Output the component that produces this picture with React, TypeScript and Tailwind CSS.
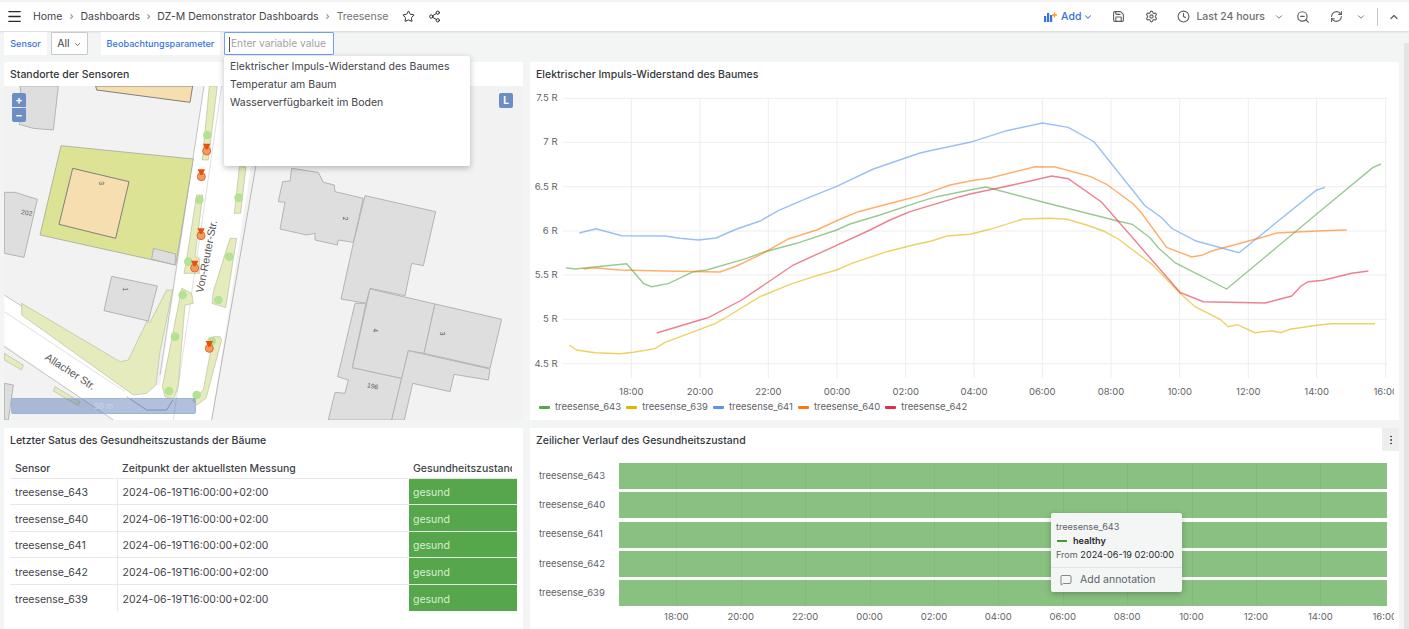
import { ChevronDown, ChevronUp, Clock, EllipsisVertical, Menu, MessageSquare, RefreshCw, Save, Settings, Share2, Star, ZoomOut } from 'lucide-react';

type Pt = [number, number];

// points read from the crops: left part starts at x=530, right part at x=970
const toPage = (left: Pt[], right: Pt[]) =>
  [...left.map(([x, y]) => [530 + x / 3, 85 + y / 3]), ...right.map(([x, y]) => [970 + x / 3, 85 + y / 3])]
    .map(([x, y]) => `${x.toFixed(1)},${y.toFixed(1)}`)
    .join(' ');

const series = [
  {
    name: 'treesense_643',
    color: '#56a64b',
    pts: toPage(
      [[108, 548], [135, 552], [200, 545], [290, 536], [340, 595], [365, 605], [415, 596], [490, 560], [530, 555], [650, 520], [705, 500], [800, 475], [920, 435], [960, 417], [1050, 390], [1170, 350], [1220, 335], [1320, 315]],
      [[48, 306], [215, 350], [440, 407], [487, 418], [540, 458], [565, 488], [615, 533], [770, 612], [1040, 387], [1208, 248], [1233, 237]],
    ),
  },
  {
    name: 'treesense_639',
    color: '#e0b400',
    pts: toPage(
      [[118, 780], [140, 795], [195, 803], [270, 806], [310, 802], [375, 791], [405, 772], [510, 733], [555, 716], [590, 696], [690, 635], [780, 598], [860, 572], [920, 555], [965, 535], [1070, 500], [1150, 480], [1205, 468], [1250, 453], [1320, 448]],
      [[60, 433], [160, 402], [240, 400], [290, 403], [350, 420], [400, 438], [445, 462], [548, 540], [630, 625], [675, 665], [750, 703], [775, 725], [802, 719], [855, 743], [905, 737], [932, 743], [960, 733], [1040, 721], [1085, 716], [1215, 716]],
    ),
  },
  {
    name: 'treesense_641',
    color: '#5794f2',
    pts: toPage(
      [[148, 444], [198, 431], [275, 452], [405, 453], [450, 460], [505, 465], [558, 459], [620, 432], [690, 408], [745, 377], [830, 340], [920, 304], [1030, 252], [1170, 204], [1210, 195], [1320, 172]],
      [[110, 137], [217, 114], [295, 127], [372, 170], [525, 362], [575, 398], [605, 430], [678, 468], [700, 474], [807, 503], [1040, 315], [1065, 307]],
    ),
  },
  {
    name: 'treesense_640',
    color: '#ff780a',
    pts: toPage(
      [[160, 552], [195, 548], [270, 555], [400, 558], [570, 561], [620, 543], [690, 510], [775, 462], [860, 435], [925, 405], [985, 380], [1070, 358], [1170, 332], [1260, 300], [1320, 288]],
      [[60, 279], [195, 245], [255, 246], [360, 274], [410, 298], [490, 357], [515, 385], [590, 487], [665, 516], [695, 511], [725, 498], [880, 456], [920, 444], [1040, 438], [1130, 435]],
    ),
  },
  {
    name: 'treesense_642',
    color: '#e02f44',
    pts: toPage(
      [[380, 744], [510, 705], [535, 698], [635, 645], [790, 540], [900, 490], [1020, 435], [1080, 405], [1140, 380], [1240, 350], [1290, 335], [1320, 327]],
      [[110, 304], [245, 273], [295, 281], [395, 352], [630, 622], [700, 650], [885, 654], [965, 633], [993, 603], [1015, 590], [1060, 586], [1145, 565], [1195, 558]],
    ),
  },
];

const yTicks: [string, number][] = [['7.5 R', 98.3], ['7 R', 142.3], ['6.5 R', 186.7], ['6 R', 231], ['5.5 R', 275], ['5 R', 319.3], ['4.5 R', 363.7]];
const xTicks: [string, number][] = [['18:00', 631.3], ['20:00', 700], ['22:00', 768.3], ['00:00', 837], ['02:00', 905.7], ['04:00', 974], ['06:00', 1042.3], ['08:00', 1111], ['10:00', 1179.7], ['12:00', 1248.3], ['14:00', 1316.7], ['16:00', 1385.7]];

const timeTicks: [string, number][] = [['18:00', 676.3], ['20:00', 740.7], ['22:00', 805.1], ['00:00', 869.5], ['02:00', 933.9], ['04:00', 998.3], ['06:00', 1062.7], ['08:00', 1127.1], ['10:00', 1191.5], ['12:00', 1255.9], ['14:00', 1320.3], ['16:00', 1384.7]];

const rows = ['treesense_643', 'treesense_640', 'treesense_641', 'treesense_642', 'treesense_639'];

const greyBuildings = [
  '13,322 45,322 112,343 72,517 13,505',
  '60,3 175,3 160,135 100,130 57,118 70,90',
  '460,490 527,507 525,540 455,522',
  '335,574 472,603 445,708 312,677',
  '875,250 955,262 970,292 1003,300 1005,320 1090,340 1060,472 1015,465 1012,480 945,465 945,445 920,450 840,432 855,352 835,350 848,290 870,288',
  '1095,332 1307,380 1270,542 1235,535 1215,632 1110,610 1098,655 1023,642 1060,475',
  '1065,655 1098,655 1057,848 1205,880 1175,1005 985,1005 1005,922 1035,925 1045,885 1013,875',
  '1110,612 1305,657 1272,805 1225,797 1205,880 1057,848',
  '1305,657 1505,703 1470,850 1272,805',
  '1225,797 1470,852 1465,885 1362,868 1350,920 1238,895 1213,1005 1175,1005 1205,880',
  '13,895 40,900 25,1005 13,1005',
];

const verge = [
  '628,3 652,3 625,225 607,225',
  '590,330 608,330 585,515 598,520 598,565 552,565 560,520',
  '718,245 738,245 722,385 703,385',
  '690,460 710,460 677,668 636,655 640,620',
  '545,610 575,625 580,655 555,660 535,900 522,942 495,935 487,905',
  '640,755 660,755 665,765 618,940 590,960 578,945 610,915',
  '65,655 360,830 385,825 440,710 450,712 500,615 518,615 480,800 468,900 440,925 400,930 65,690',
  '13,805 70,840 65,855 13,825',
  '165,905 240,950 235,962 160,918',
];

const trees: Pt[] = [[622, 150], [598, 345], [565, 530], [548, 630], [525, 755], [507, 918], [590, 930], [655, 645], [688, 515], [716, 338], [635, 768]];
const markers: Pt[] = [[620, 198], [604, 275], [603, 452], [584, 549], [628, 790]];
const houseNumbers: [string, number, number, number][] = [['3', 302, 300, 90], ['202', 80, 390, 10], ['1', 375, 618, 90], ['2', 1035, 407, 90], ['4', 1124, 742, 90], ['3', 1326, 752, 90], ['196', 1118, 910, 12]];

function MapDrawing() {
  return (
    <svg viewBox="12 3 1557 1002" className="block h-full w-full" preserveAspectRatio="none">
      <rect x="12" y="3" width="1557" height="1002" fill="#f2f2f2" />
      <polygon points="612,3 790,3 635,1005 340,1005 13,780 13,630 440,900 480,900" fill="#ffffff" />
      <polyline points="612,3 480,870" fill="none" stroke="#c4c4c4" strokeWidth="3" />
      <polyline points="665,3 520,1005" fill="none" stroke="#d0d0d0" strokeWidth="2" />
      <polyline points="768,240 635,1005" fill="none" stroke="#b8b8b8" strokeWidth="3" />
      <polyline points="13,630 440,905" fill="none" stroke="#c4c4c4" strokeWidth="3" />
      <polyline points="13,680 375,920" fill="none" stroke="#cfcfcf" strokeWidth="2" />
      <polyline points="13,785 340,1005" fill="none" stroke="#c4c4c4" strokeWidth="3" />
      <polyline points="380,935 440,975 500,975 518,945" fill="none" stroke="#888888" strokeWidth="2" />
      {verge.map((p) => (
        <polygon key={p} points={p} fill="#e5ebbd" stroke="#a8ad88" strokeWidth="1.5" />
      ))}
      <polygon points="183,182 580,222 527,540 120,450" fill="#dde394" stroke="#999999" strokeWidth="2" />
      <polygon points="218,250 387,290 347,460 177,418" fill="#f6deb0" stroke="#80807a" strokeWidth="3" />
      <polygon points="287,3 578,3 570,52 290,15" fill="#f6deb0" stroke="#80807a" strokeWidth="3" />
      {greyBuildings.map((p) => (
        <polygon key={p} points={p} fill="#dedede" stroke="#b4b4b4" strokeWidth="3" />
      ))}
      {trees.map(([x, y]) => (
        <circle key={`${x}-${y}`} cx={x} cy={y} r="13" fill="#b4e294" />
      ))}
      {markers.map(([x, y]) => (
        <g key={`${x}-${y}`}>
          <circle cx={x} cy={y} r="12" fill="#ee9c62" stroke="#e8672a" strokeWidth="3" />
          <polygon points={`${x - 11},${y - 22} ${x + 11},${y - 22} ${x + 3},${y - 5} ${x - 3},${y - 5}`} fill="#e3530b" />
        </g>
      ))}
      {houseNumbers.map(([label, x, y, rot]) => (
        <text key={`${label}-${x}`} x={x} y={y} fontSize="20" fill="#555555" textAnchor="middle" transform={`rotate(${rot} ${x} ${y - 6})`} fontFamily="Liberation Sans, sans-serif">
          {label}
        </text>
      ))}
      <text x="622" y="515" fontSize="32" fill="#555555" textAnchor="middle" dominantBaseline="middle" transform="rotate(-79 622 515)" fontFamily="Liberation Sans, sans-serif">
        Von-Reuter-Str.
      </text>
      <text x="210" y="862" fontSize="32" fill="#555555" textAnchor="middle" dominantBaseline="middle" transform="rotate(33 210 862)" fontFamily="Liberation Sans, sans-serif">
        Allacher Str.
      </text>
    </svg>
  );
}

function AddIcon() {
  return (
    <svg width="14" height="11" viewBox="0 0 14 11" className="text-[#3871dc]">
      <path d="M0 5h2.2v6H0zM3 2h2.2v9H3zM6 4h2.2v7H6z" fill="currentColor" />
      <path d="M10.5 1.5v5M8 4h5" stroke="#ff9830" strokeWidth="1.4" fill="none" />
    </svg>
  );
}

function TopBar() {
  return (
    <header className="mt-[2px] flex h-[29px] shrink-0 items-center bg-white pl-[6px] text-[10.5px] text-[#3f4349] shadow-[0_1px_2px_rgba(0,0,0,0.12)]">
      <Menu size={17} strokeWidth={1.8} className="text-[#24292e]" />
      <nav className="ml-[10px] flex items-center">
        <span>Home</span>
        <span className="w-[18px] text-center text-[#777]">›</span>
        <span>Dashboards</span>
        <span className="w-[17px] text-center text-[#777]">›</span>
        <span>DZ-M Demonstrator Dashboards</span>
        <span className="w-[18px] text-center text-[#777]">›</span>
        <span className="text-[#6e7378]">Treesense</span>
      </nav>
      <Star size={13} strokeWidth={1.8} className="ml-[14px] text-[#24292e]" />
      <Share2 size={13} strokeWidth={1.8} className="ml-[13px] text-[#24292e]" />
      <div className="ml-auto flex items-center">
        <AddIcon />
        <span className="ml-[3px] font-medium text-[#3871dc]">Add</span>
        <ChevronDown size={10} strokeWidth={2.5} className="ml-[2px] text-[#3871dc]" />
        <Save size={13} className="ml-[19px] text-[#5a5e63]" />
        <Settings size={13} className="ml-[20px] text-[#5a5e63]" />
        <Clock size={13} className="ml-[19px] text-[#5a5e63]" />
        <span className="ml-[6px] font-medium text-[#6b6f74]">Last 24 hours</span>
        <ChevronDown size={10} strokeWidth={2} className="ml-[9px] text-[#5a5e63]" />
        <ZoomOut size={14} className="ml-[12px] text-[#5a5e63]" />
        <RefreshCw size={13} className="ml-[20px] text-[#5a5e63]" />
        <ChevronDown size={10} strokeWidth={2} className="ml-[13px] text-[#5a5e63]" />
        <div className="ml-[11px] h-[18px] w-px bg-[#c8c8c8]" />
        <ChevronUp size={12} strokeWidth={2.5} className="ml-[10px] mr-[9px] text-[#5a5e63]" />
      </div>
    </header>
  );
}

function VariableRow() {
  return (
    <div className="flex h-[24px] shrink-0 items-end pl-[4px] text-[10.5px]">
      <div className="flex h-[23px] w-[43px] items-center justify-center bg-white pt-px text-[9.1px] font-medium text-[#3871dc]">Sensor</div>
      <div className="ml-[4px] flex h-[23px] w-[37px] items-center justify-center gap-[3px] rounded-[1px] border border-[#c8cacc] bg-white pt-px text-[#3f4349]">
        All <ChevronDown size={9} strokeWidth={2} />
      </div>
      <div className="ml-[13px] flex h-[23px] w-[119px] items-center justify-center bg-white pt-px text-[9.1px] font-medium text-[#3871dc]">Beobachtungsparameter</div>
      <div className="ml-[4px] flex h-[23px] w-[110px] items-center whitespace-nowrap rounded-[1px] border border-[#6e9fff] bg-white pl-[4px] pt-px text-[10.2px] text-[#a0a3a6]">
        <span className="mr-px h-[15px] w-px bg-[#555]" />
        Enter variable value
      </div>
    </div>
  );
}

function Dropdown() {
  return (
    <div className="absolute left-[224px] top-[56px] z-10 h-[110px] w-[246px] rounded-[2px] bg-white pl-[6px] pt-[2px] text-[10.5px] text-[#3f4349] shadow-[0_2px_6px_rgba(0,0,0,0.25)]">
      <div className="h-[18px] leading-[18px]">Elektrischer Impuls-Widerstand des Baumes</div>
      <div className="h-[18px] leading-[18px]">Temperatur am Baum</div>
      <div className="h-[18px] leading-[18px]">Wasserverfügbarkeit im Boden</div>
    </div>
  );
}

function PanelTitle({ children }: { children: string }) {
  return <div className="flex h-[24px] shrink-0 items-center pl-[6px] pt-[2px] text-[10.5px] font-medium text-[#33373c]">{children}</div>;
}

function MapPanel() {
  return (
    <section className="flex h-[358px] w-[519px] shrink-0 flex-col bg-white">
      <PanelTitle>Standorte der Sensoren</PanelTitle>
      <div className="relative min-h-0 flex-1">
        <MapDrawing />
        <div className="absolute left-[8px] top-[7px] flex w-[14px] flex-col gap-px text-center text-[11px] font-bold leading-[14px] text-white">
          <div className="h-[14px] rounded-t-[2px] bg-[#6b8fc4]">+</div>
          <div className="h-[14px] rounded-b-[2px] bg-[#6b8fc4]">−</div>
        </div>
        <div className="absolute right-[10px] top-[7px] h-[15px] w-[14px] rounded-[2px] bg-[#6b8fc4] text-center text-[10px] font-bold leading-[15px] text-white">L</div>
        <div className="absolute bottom-[6px] left-[7px] flex h-[16px] w-[185px] items-center justify-center rounded-[2px] border border-[#9db4d8] bg-[#3c64aa]/40 text-[8px] text-[#c9d4e6]">50 m</div>
      </div>
    </section>
  );
}

function ChartPanel() {
  return (
    <section className="flex h-[358px] w-[869px] shrink-0 flex-col bg-white">
      <PanelTitle>Elektrischer Impuls-Widerstand des Baumes</PanelTitle>
      <svg viewBox="530 86 864 311" className="block h-[311px] w-[864px] shrink-0" fontFamily="Inter, sans-serif">
        {yTicks.map(([label, y]) => (
          <g key={label}>
            <line x1="563" x2="1387" y1={y} y2={y} stroke="#ededed" />
            <text x="557.5" y={y + 3} fontSize="9.5" fill="#5f6368" textAnchor="end">{label}</text>
          </g>
        ))}
        {xTicks.map(([label, x]) => (
          <g key={label}>
            <line x1={x} x2={x} y1="98" y2="378" stroke="#ededed" />
            <text x={x} y="395" fontSize="9.5" fill="#5f6368" textAnchor="middle">{label}</text>
          </g>
        ))}
        {series.map((s) => (
          <polyline key={s.name} points={s.pts} fill="none" stroke={s.color} strokeOpacity="0.6" strokeWidth="1.4" />
        ))}
      </svg>
      <div className="flex h-[23px] items-start gap-[5px] pl-[9px] pt-[3px] text-[9.5px] leading-[14px] text-[#5f6368]">
        {series.map((s) => (
          <div key={s.name} className="flex items-center gap-[5px]">
            <span className="h-[3px] w-[11px] rounded-[1px]" style={{ backgroundColor: s.color }} />
            {s.name}
          </div>
        ))}
      </div>
    </section>
  );
}

function StatusTable() {
  return (
    <section className="flex h-[201px] w-[519px] shrink-0 flex-col bg-white">
      <PanelTitle>Letzter Satus des Gesundheitszustands der Bäume</PanelTitle>
      <table className="ml-[6px] mt-[6px] w-[507px] table-fixed border-collapse text-[10.5px] text-[#3f4349]">
        <colgroup>
          <col className="w-[107px]" />
          <col className="w-[292px]" />
          <col className="w-[108px]" />
        </colgroup>
        <thead>
          <tr className="h-[20px] border-b border-[#e8e8e8] text-left">
            <th className="pl-[5px] pt-[2px] font-medium">Sensor</th>
            <th className="pl-[5px] pt-[2px] font-medium">Zeitpunkt der aktuellsten Messung</th>
            <th className="overflow-hidden whitespace-nowrap pl-[4px] pt-[2px] font-medium">
              <div className="w-[99px] overflow-hidden">Gesundheitszustand</div>
            </th>
          </tr>
        </thead>
        <tbody>
          {rows.map((r) => (
            <tr key={r} className="h-[26.6px] border-b border-[#e8e8e8] last:border-b-0">
              <td className="pl-[5px] pt-[3px]">{r}</td>
              <td className="border-l border-[#e8e8e8] pl-[5px] pt-[3px]">2024-06-19T16:00:00+02:00</td>
              <td className="bg-[#56a64b] pl-[4px] pt-[3px] text-[#d8eed4]">gesund</td>
            </tr>
          ))}
        </tbody>
      </table>
    </section>
  );
}

function TimelinePanel() {
  return (
    <section className="relative flex h-[201px] w-[869px] shrink-0 flex-col bg-white">
      <PanelTitle>Zeilicher Verlauf des Gesundheitszustand</PanelTitle>
      <div className="absolute right-0 top-0 flex h-[23px] w-[17px] items-center justify-center bg-[#eeeeee] text-[#444]">
        <EllipsisVertical size={12} strokeWidth={2} />
      </div>
      <div className="relative mt-[11px] flex flex-col gap-[3.25px] pr-[12px]">
        {rows.map((r) => (
          <div key={r} className="flex h-[26px] items-center pl-[9px] text-[9.5px] text-[#5f6368]">
            <span className="w-[80px]">{r}</span>
            <div className="h-full flex-1 bg-[#89c181]" />
          </div>
        ))}
        {timeTicks.slice(0, 11).map(([label, x]) => (
          <span key={label} className="absolute bottom-0 top-0 w-px bg-black/[0.04]" style={{ left: x - 530 }} />
        ))}
      </div>
      <div className="relative mt-[4px] h-[14px] w-[864px] overflow-hidden text-[9.5px] leading-[14px] text-[#5f6368]">
        {timeTicks.map(([label, x]) => (
          <span key={label} className="absolute -translate-x-1/2" style={{ left: x - 530 }}>{label}</span>
        ))}
      </div>
    </section>
  );
}

function Tooltip() {
  return (
    <div className="absolute left-[1051px] top-[513px] z-10 h-[79px] w-[131px] whitespace-nowrap rounded-[2px] bg-[#f4f5f5] text-[9.1px] text-[#5f6368] shadow-[0_2px_6px_rgba(0,0,0,0.25)]">
      <div className="px-[5px] pt-[7px] leading-[14px]">treesense_643</div>
      <div className="flex items-center px-[6px] leading-[14px]">
        <span className="h-[2px] w-[10px] bg-[#3f9e32]" />
        <span className="ml-[6px] font-semibold text-[#24292e]">healthy</span>
      </div>
      <div className="px-[5px] leading-[14px]">
        From <span className="text-[#24292e]">2024-06-19 02:00:00</span>
      </div>
      <div className="mt-[5px] flex h-[24px] items-center gap-[8px] border-t border-[#e2e3e4] px-[9px] pt-px text-[10.5px]">
        <MessageSquare size={12} strokeWidth={1.5} />
        Add annotation
      </div>
    </div>
  );
}

export default function App() {
  return (
    <div className="relative flex h-[629px] w-[1409px] flex-col overflow-hidden bg-[#f3f4f4] font-['Inter',sans-serif]">
      <TopBar />
      <VariableRow />
      <main className="mt-[7px] flex flex-col gap-[8px] pl-[4px]">
        <div className="flex gap-[7px]">
          <MapPanel />
          <ChartPanel />
        </div>
        <div className="flex gap-[7px]">
          <StatusTable />
          <TimelinePanel />
        </div>
      </main>
      <Dropdown />
      <Tooltip />
      <div className="absolute bottom-0 right-0 top-[43px] w-[5px] bg-[#e4e4e4]" />
    </div>
  );
}
